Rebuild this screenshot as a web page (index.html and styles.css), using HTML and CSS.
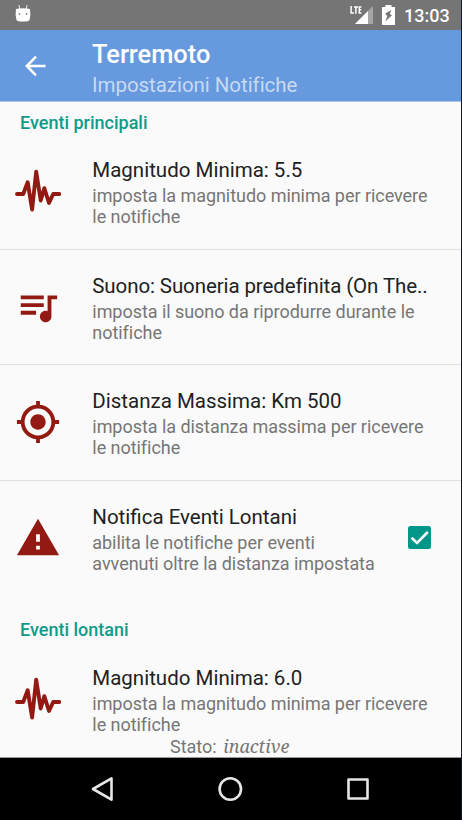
FILE: index.html
```html
<!DOCTYPE html>
<html lang="it">
<head>
<meta charset="utf-8">
<title>Terremoto</title>
<link rel="stylesheet" href="styles.css">
</head>
<body>
<svg width="0" height="0" class="defs">
  <symbol id="pulse" viewBox="0 -3 46 46"><path d="M2 23H8.2L12.7 11.2L17.1 38.5L21.2 0.7L25.7 29.5L29.3 17.2L34 32L38.2 23H44.2" fill="none" stroke="#931a12" stroke-width="3.9" stroke-linejoin="round" stroke-linecap="round"/></symbol>
</svg>
<div class="phone">
  <header class="status">
    <svg class="droid" width="16" height="18" viewBox="0 0 16 18"><path d="M4 1l1 5M12 1l-1 5" stroke="#ddd" stroke-width="1.2"/><path d="M1 5Q8 3.5 15 5Q16 11 14.5 16Q13.5 17.5 8 17.5T1.5 16Q0 11 1 5z" fill="#fff"/><circle cx="4.4" cy="10" r="0.9" fill="#888"/><circle cx="11.6" cy="10" r="0.9" fill="#888"/></svg>
    <svg class="signal" width="23" height="19" viewBox="0 0 23 19"><path d="M23 0V18H5z" fill="#a6a6a6"/><path d="M18 5V18H5z" fill="#fff"/><path d="M1.100 0v6.900H4M3.900.9H8M5.900.9V7.700M11.400.9H9.300V6.900h2.100M9.300 3.800h1.900" fill="none" stroke="#fff" stroke-width="1.500"/></svg>
    <svg class="battery" width="13" height="20" viewBox="0 0 13 20"><path d="M3.5 0h6v2H13v18H0V2h3.5z" fill="#fff"/><path d="M9.4 5L3.2 8.5L5.300 11.3L3.2 16.4L10 10.300L7.800 9z" fill="#757575"/></svg>
    <span class="clock">13:03</span>
  </header>
  <nav class="toolbar">
    <svg class="back" width="22" height="22" viewBox="0 0 22 22"><path d="M20.5 11H2M11 1.7L1.8 11L11 20.3" fill="none" stroke="#fff" stroke-width="2.5"/></svg>
    <div><div class="app-title">Terremoto</div><div class="app-sub">Impostazioni Notifiche</div></div>
  </nav>
  <main class="list">
    <h2 class="section first">Eventi principali</h2>
    <div class="row ruled">
      <svg class="icon"><use href="#pulse"/></svg>
      <div class="text"><div class="title">Magnitudo Minima: 5.5</div><div class="summary">imposta la magnitudo minima per ricevere<br>le notifiche</div></div>
    </div>
    <div class="row ruled">
      <svg class="icon" viewBox="0 0 24 24"><path fill="#931a12" d="M15 6H3v2h12V6zm0 4H3v2h12v-2zM3 16h8v-2H3v2zM17 6v8.18c-.31-.11-.65-.18-1-.18-1.66 0-3 1.34-3 3s1.34 3 3 3 3-1.34 3-3V8h3V6h-5z"/></svg>
      <div class="text"><div class="title long">Suono: Suoneria predefinita (On The..</div><div class="summary">imposta il suono da riprodurre durante le<br>notifiche</div></div>
    </div>
    <div class="row ruled">
      <svg class="icon" viewBox="0 0 24 24"><path fill="#931a12" d="M12 8c-2.21 0-4 1.79-4 4s1.79 4 4 4 4-1.79 4-4-1.79-4-4-4zm8.94 3A8.994 8.994 0 0 0 13 3.06V1h-2v2.06A8.994 8.994 0 0 0 3.06 11H1v2h2.06A8.994 8.994 0 0 0 11 20.94V23h2v-2.06A8.994 8.994 0 0 0 20.94 13H23v-2h-2.06zM12 19c-3.87 0-7-3.13-7-7s3.13-7 7-7 7 3.13 7 7-3.13 7-7 7z"/></svg>
      <div class="text"><div class="title">Distanza Massima: Km 500</div><div class="summary">imposta la distanza massima per ricevere<br>le notifiche</div></div>
    </div>
    <div class="row">
      <svg class="icon" viewBox="0 0 24 24"><path fill="#931a12" d="M1 21h22L12 2 1 21zm12-3h-2v-2h2v2zm0-4h-2v-4h2v4z"/></svg>
      <div class="text"><div class="title">Notifica Eventi Lontani</div><div class="summary">abilita le notifiche per eventi<br>avvenuti oltre la distanza impostata</div></div>
      <svg class="check" width="23" height="23" viewBox="0 0 23 23"><rect width="23" height="23" rx="2.5" fill="#009688"/><path d="M3.6 11.7L9 17L19.8 6" fill="none" stroke="#fafafa" stroke-width="2.6"/></svg>
    </div>
    <h2 class="section">Eventi lontani</h2>
    <div class="row">
      <svg class="icon"><use href="#pulse"/></svg>
      <div class="text"><div class="title">Magnitudo Minima: 6.0</div><div class="summary">imposta la magnitudo minima per ricevere<br>le notifiche</div></div>
    </div>
    <div class="state">Stato: <em>inactive</em></div>
  </main>
  <footer class="navbar">
    <svg width="24" height="26" viewBox="0 0 24 26"><path d="M21.5 2.3V23.7L3 13z" fill="none" stroke="#e6e6e6" stroke-width="2.6" stroke-linejoin="round"/></svg>
    <svg width="26" height="26" viewBox="0 0 26 26"><circle cx="12.3" cy="13" r="10.7" fill="none" stroke="#e6e6e6" stroke-width="2.6"/></svg>
    <svg width="22" height="22" viewBox="0 0 22 22"><rect x="1.5" y="1.5" width="19" height="19" fill="none" stroke="#e6e6e6" stroke-width="2.6" stroke-linejoin="round"/></svg>
  </footer>
</div>
</body>
</html>
```
FILE: styles.css
```css
* { box-sizing: border-box; }
body { margin: 0; background: #0b1c3a; font-family: Roboto, sans-serif; overflow: hidden; }
.defs { display: block; }
.phone { width: 461px; height: 820px; display: flex; flex-direction: column; background: #fafafa; }
.status { height: 30px; flex: none; background: #757575; display: flex; align-items: flex-start; padding: 5px 11px 0 15px; color: #fff; }
.droid { margin-top: -1px; }
.signal { margin: 1px 9px 0 auto; }
.clock { font-size: 18px; font-weight: 500; line-height: 21px; margin-left: 9px; width: 46px; white-space: nowrap; }
.toolbar { height: 72px; flex: none; background: #6699de; border-bottom: 1px solid #a9c4e8; display: flex; align-items: flex-start; color: #fff; }
.back { margin: 25px 45px 0 25px; }
.app-title { font-size: 25.4px; font-weight: 500; line-height: 30px; margin-top: 9px; }
.app-sub { font-size: 20.5px; line-height: 24px; margin-top: 4px; color: #c8d9f3; letter-spacing: -0.05px; }
.list { height: 656px; flex: none; position: relative; overflow: hidden; border-bottom: 1px solid #999; }
.section { margin: 0; height: 46px; padding: 22.5px 0 0 20px; font-size: 18px; font-weight: 500; line-height: 21px; color: #109b89; }
.first { height: 32.7px; padding-top: 10px; }
.row { height: 115.4px; display: flex; align-items: center; padding-left: 15.3px; }
.ruled { border-bottom: 1.3px solid #e0e0e0; }
.icon { width: 46px; height: 46px; flex: none; margin: 0 31px 1.4px 0; }
.text { white-space: nowrap; padding-top: 2px; }
.title { font-size: 20.5px; line-height: 24px; color: #212121; }
.long { letter-spacing: -0.1px; }
.summary { font-size: 18px; line-height: 21px; margin-top: 3px; color: #767676; letter-spacing: -0.045px; }
.check { margin: 0 30px 2.5px auto; }
.state { position: absolute; left: 170px; bottom: -1px; font-size: 18px; line-height: 22px; color: #767676; white-space: nowrap; }
.state em { font-family: "Noto Serif", "Droid Serif", "DejaVu Serif", serif; margin-left: 2px; }
.navbar { flex: 1; background: #000; display: flex; justify-content: space-between; align-items: center; padding: 0 92px 0 90px; }
```
